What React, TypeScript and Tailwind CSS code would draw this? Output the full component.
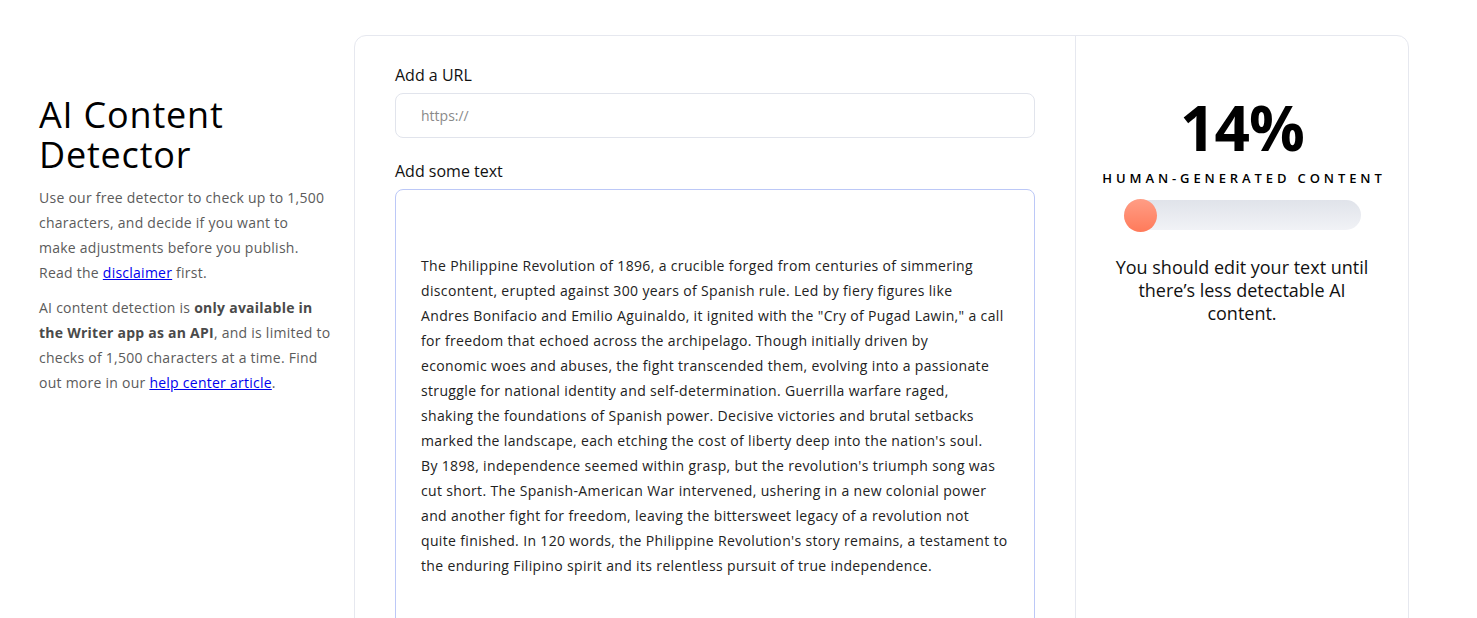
const essay = [
  "The Philippine Revolution of 1896, a crucible forged from centuries of simmering",
  "discontent, erupted against 300 years of Spanish rule. Led by fiery figures like",
  "Andres Bonifacio and Emilio Aguinaldo, it ignited with the \"Cry of Pugad Lawin,\" a call",
  "for freedom that echoed across the archipelago. Though initially driven by",
  "economic woes and abuses, the fight transcended them, evolving into a passionate",
  "struggle for national identity and self-determination. Guerrilla warfare raged,",
  "shaking the foundations of Spanish power. Decisive victories and brutal setbacks",
  "marked the landscape, each etching the cost of liberty deep into the nation's soul.",
  "By 1898, independence seemed within grasp, but the revolution's triumph song was",
  "cut short. The Spanish-American War intervened, ushering in a new colonial power",
  "and another fight for freedom, leaving the bittersweet legacy of a revolution not",
  "quite finished. In 120 words, the Philippine Revolution's story remains, a testament to",
  "the enduring Filipino spirit and its relentless pursuit of true independence.",
];

function Intro() {
  return (
    <div className="w-[315px] shrink-0 pl-[39px] pt-[95px]">
      <h1 className="text-[36px] leading-[40px] font-medium tracking-[0.8px] text-black">
        AI Content
        <br />
        Detector
      </h1>
      <p className="mt-[10px] text-[14px] leading-[25px] tracking-[0.25px] text-[#5b5b5b] whitespace-nowrap">
        Use our free detector to check up to 1,500
        <br />
        characters, and decide if you want to
        <br />
        make adjustments before you publish.
        <br />
        Read the <a href="#" className="text-[#0000ee] underline">disclaimer</a> first.
      </p>
      <p className="mt-[10px] text-[14px] leading-[25px] tracking-[0.25px] text-[#5b5b5b] whitespace-nowrap">
        AI content detection is <b className="font-bold text-[#4a4a4a]">only available in</b>
        <br />
        <b className="font-bold text-[#4a4a4a]">the Writer app as an API</b>, and is limited to
        <br />
        checks of 1,500 characters at a time. Find
        <br />
        out more in our <a href="#" className="text-[#0000ee] underline">help center article</a>.
      </p>
    </div>
  );
}

function Editor() {
  return (
    <div className="w-[721px] shrink-0 px-[40px] pt-[27px] border-r border-[#e6e8ef]">
      <label className="block text-[16px] leading-[24px] font-medium text-[#111]">Add a URL</label>
      <div className="mt-[6px] h-[45px] rounded-lg border border-[#e1e4ec] flex items-center px-[25px]">
        <span className="text-[14px] text-[#8a8a8a]">https://</span>
      </div>
      <label className="mt-[21px] block text-[16px] leading-[24px] font-medium text-[#111]">Add some text</label>
      <div className="mt-[6px] h-[460px] rounded-lg border border-[#bcc8f7] pl-[25px] pt-[63px]">
        {essay.map((line, i) => (
          <div key={i} className="text-[14px] leading-[25px] tracking-[0.35px] text-[#222] whitespace-nowrap">
            {line}
          </div>
        ))}
      </div>
    </div>
  );
}

function Score() {
  return (
    <div className="flex-1 flex flex-col items-center pt-[57px]">
      <div className="text-[62px] leading-[68px] font-bold text-black tracking-[-1px]">14%</div>
      <div className="mt-[7px] text-[13px] leading-[20px] font-semibold tracking-[0.3em] text-black pl-[4px]">
        HUMAN-GENERATED CONTENT
      </div>
      <div className="mt-[12px] w-[237px] h-[30px] rounded-full bg-gradient-to-b from-[#e0e3ea] to-[#f1f2f6] flex items-center">
        <div className="w-[33px] h-[33px] rounded-full bg-gradient-to-b from-[#ff9d85] to-[#ff7a5a]" />
      </div>
      <p className="mt-[26px] text-[18px] leading-[23px] text-[#111] text-center w-[270px]">
        You should edit your text until there’s less detectable AI content.
      </p>
    </div>
  );
}

export default function App() {
  return (
    <div className="w-[1477px] h-[618px] overflow-hidden bg-white flex font-['Open_Sans',sans-serif]">
      <Intro />
      <div className="mt-[35px] ml-[39px] w-[1055px] h-[700px] rounded-xl border border-[#e6e8ef] flex">
        <Editor />
        <Score />
      </div>
    </div>
  );
}
